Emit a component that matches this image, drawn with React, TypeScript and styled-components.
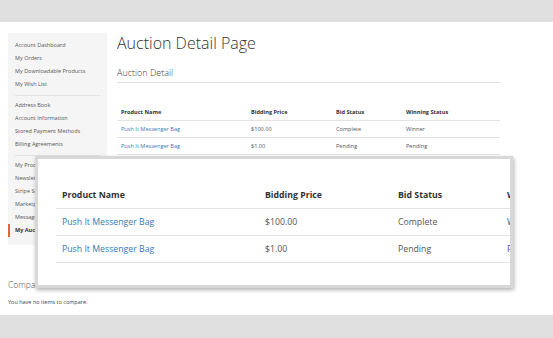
import React from 'react'
import styled, { createGlobalStyle } from 'styled-components'

const GlobalStyle = createGlobalStyle`
  html, body {
    margin: 0;
    padding: 0;
    background: #fff;
    font-family: 'Open Sans', 'Liberation Sans', sans-serif;
  }
`

const navGroups = [
  ['Account Dashboard', 'My Orders', 'My Downloadable Products', 'My Wish List'],
  ['Address Book', 'Account Information', 'Stored Payment Methods', 'Billing Agreements'],
  [
    'My Product Reviews',
    'Newsletter Subscriptions',
    'Stripe Subscriptions',
    'Marketplace',
    'Messages',
    'My Auction List',
  ],
]

const columns = ['Product Name', 'Bidding Price', 'Bid Status', 'Winning Status']
const baseWidths = [130, 85, 70, 98]

const rows = [
  { name: 'Push It Messenger Bag', price: '$100.00', status: 'Complete', winning: 'Winner' },
  { name: 'Push It Messenger Bag', price: '$1.00', status: 'Pending', winning: 'Pending' },
]

export default function App() {
  return (
    <Page>
      <GlobalStyle />
      <TopBar />
      <Body>
        <SideColumn>
          <Sidebar>
            {navGroups.map((group, gi) => (
              <React.Fragment key={gi}>
                {gi > 0 && <NavDivider />}
                {group.map((label) => (
                  <NavItem key={label} $active={label === 'My Auction List'}>
                    {label}
                  </NavItem>
                ))}
              </React.Fragment>
            ))}
          </Sidebar>
          <CompareTitle>Compare Products</CompareTitle>
          <CompareEmpty>You have no items to compare.</CompareEmpty>
        </SideColumn>
        <Content>
          <PageTitle>Auction Detail Page</PageTitle>
          <SectionTitle>Auction Detail</SectionTitle>
          <BidTable scale={1} />
        </Content>
      </Body>
      <Footer />
      {/* magnified callout of the table, lies over the page */}
      <Callout>
        <BidTable scale={1.56} />
      </Callout>
    </Page>
  )
}

function BidTable({ scale }: { scale: number }) {
  return (
    <Table $scale={scale}>
      <colgroup>
        {baseWidths.map((w, i) => (
          <col key={i} style={{ width: Math.round(w * scale) }} />
        ))}
      </colgroup>
      <thead>
        <tr>
          {columns.map((c) => (
            <Th key={c} $scale={scale}>
              {c}
            </Th>
          ))}
        </tr>
      </thead>
      <tbody>
        {rows.map((r, i) => (
          <tr key={i}>
            <Td $scale={scale}>
              <Link href="#">{r.name}</Link>
            </Td>
            <Td $scale={scale}>{r.price}</Td>
            <Td $scale={scale}>{r.status}</Td>
            <Td $scale={scale}>{r.winning}</Td>
          </tr>
        ))}
      </tbody>
    </Table>
  )
}

const Page = styled.div`
  position: relative;
  width: 553px;
  height: 338px;
  overflow: hidden;
  display: flex;
  flex-direction: column;
  background: #fff;
`

const TopBar = styled.div`
  height: 22px;
  flex: none;
  background: #e0e0e0;
`

const Footer = styled.div`
  height: 23px;
  flex: none;
  background: #e0e0e0;
`

const Body = styled.div`
  flex: 1;
  display: flex;
  padding: 11px 0 0 8px;
  gap: 10px;
`

const SideColumn = styled.div`
  width: 99px;
  flex: none;
  display: flex;
  flex-direction: column;
`

const Sidebar = styled.nav`
  background: #f5f5f5;
  padding: 6px 0 8px;
  display: flex;
  flex-direction: column;
`

const NavItem = styled.div<{ $active?: boolean }>`
  height: 13px;
  line-height: 13px;
  padding-left: ${(p) => (p.$active ? '5px' : '7px')};
  border-left: ${(p) => (p.$active ? '2px solid #e5653a' : 'none')};
  font-size: 5.5px;
  font-weight: ${(p) => (p.$active ? 700 : 400)};
  color: ${(p) => (p.$active ? '#333' : '#575757')};
  white-space: nowrap;
  overflow: hidden;
`

const NavDivider = styled.div`
  height: 1px;
  margin: 4px 7px 3px;
  background: #e2e2e2;
`

const CompareTitle = styled.div`
  margin-top: 34px;
  font-size: 8.5px;
  line-height: 12px;
  font-weight: 300;
  color: #575757;
  white-space: nowrap;
`

const CompareEmpty = styled.div`
  margin-top: 6px;
  font-size: 5.5px;
  line-height: 10px;
  color: #444;
  white-space: nowrap;
`

const Content = styled.main`
  width: 383px;
  display: flex;
  flex-direction: column;
`

const PageTitle = styled.h1`
  margin: 0;
  font-size: 16px;
  line-height: 20px;
  font-weight: 300;
  color: #333;
`

const SectionTitle = styled.h2`
  margin: 14px 0 0;
  padding-bottom: 3px;
  border-bottom: 1px solid #e0e0e0;
  font-size: 9px;
  line-height: 12px;
  font-weight: 300;
  color: #444;
`

const Table = styled.table<{ $scale: number }>`
  margin-top: ${(p) => (p.$scale === 1 ? '21px' : '0')};
  border-collapse: collapse;
  table-layout: fixed;
  width: ${(p) => Math.round(383 * p.$scale)}px;
`

const cellBase = (s: number) => `
  height: ${Math.round(17 * s - 1)}px;
  padding: 0 0 0 ${Math.round(4 * s)}px;
  text-align: left;
  vertical-align: middle;
  border-bottom: 1px solid #e3e3e3;
  font-size: ${(5.6 * s).toFixed(2)}px;
  white-space: nowrap;
  overflow: hidden;
`

const Th = styled.th<{ $scale: number }>`
  ${(p) => cellBase(p.$scale)}
  font-weight: 700;
  color: #333;
`

const Td = styled.td<{ $scale: number }>`
  ${(p) => cellBase(p.$scale)}
  font-weight: 400;
  color: #555;
`

const Link = styled.a`
  color: #3579b8;
  text-decoration: none;
`

const Callout = styled.div`
  position: absolute;
  left: 35px;
  top: 156px;
  width: 478px;
  height: 132px;
  box-sizing: border-box;
  padding: 23px 0 0 18px;
  background: #fff;
  border: 3px solid #d8d8d8;
  box-shadow: 1px 2px 4px rgba(0, 0, 0, 0.3);
  overflow: hidden;
`
